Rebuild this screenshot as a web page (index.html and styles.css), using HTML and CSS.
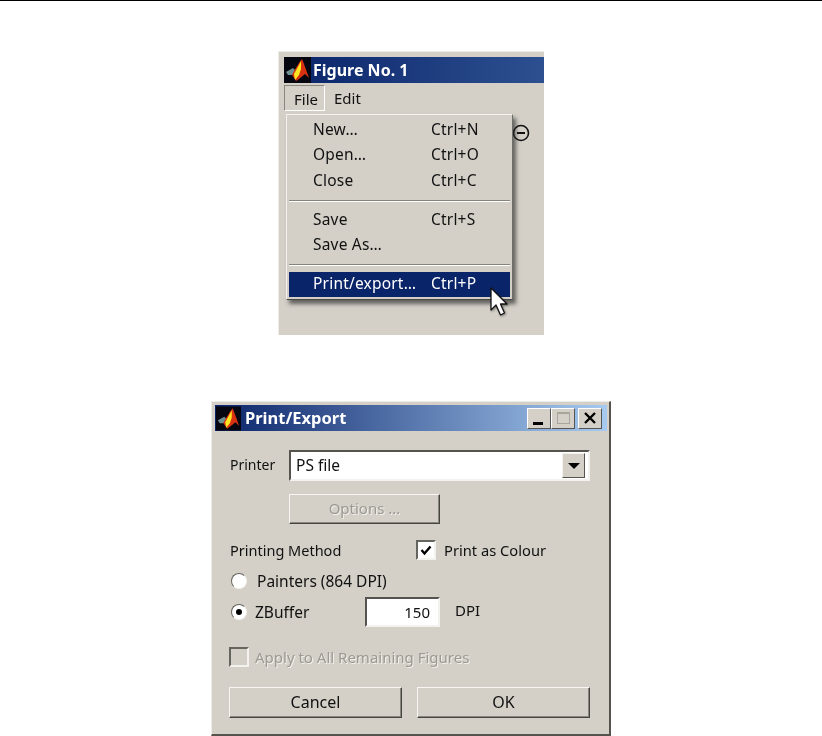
FILE: index.html
```html
<!DOCTYPE html>
<html lang="en">
<head>
<meta charset="utf-8">
<title>Print/Export</title>
<link rel="stylesheet" href="styles.css">
</head>
<body>
<svg width="0" height="0" class="defs">
  <defs>
    <symbol id="logo" viewBox="0 0 27 26">
      <rect width="27" height="26" fill="#05060f"/>
      <path d="M2 15 L9 11 L12 14 L8 18 L4 18Z" fill="#6f8f90"/>
      <path d="M10 14 L15 6 L18 2 L20 7 L25 21 L21 17 L15 22 L12 24 L8 18Z" fill="#d83212"/>
      <path d="M10 17 L15 8 L17 4 L17 12 L15 18 L11 23Z" fill="#ffe61e"/>
    </symbol>
  </defs>
</svg>
<header class="rule"></header>
<main class="page">
  <section class="figure">
    <div class="fig-title">
      <svg class="fig-logo"><use href="#logo"/></svg>
      <span>Figure No. 1</span>
    </div>
    <nav class="menubar">
      <span class="menu-item menu-open">File</span>
      <span class="menu-item">Edit</span>
    </nav>
    <svg class="zoom-icon" viewBox="0 0 18 18"><circle cx="9" cy="9" r="7.5" fill="none" stroke="#111" stroke-width="1.6"/><path d="M5 9h8" stroke="#111" stroke-width="2"/></svg>
    <div class="popup">
      <div class="row"><span class="row-name">New…</span><span>Ctrl+N</span></div>
      <div class="row"><span class="row-name">Open…</span><span>Ctrl+O</span></div>
      <div class="row"><span class="row-name">Close</span><span>Ctrl+C</span></div>
      <div class="sep"></div>
      <div class="row"><span class="row-name">Save</span><span>Ctrl+S</span></div>
      <div class="row"><span class="row-name">Save As…</span></div>
      <div class="sep"></div>
      <div class="row row-active"><span class="row-name">Print/export…</span><span>Ctrl+P</span></div>
    </div>
    <svg class="cursor" viewBox="0 0 18 30"><path d="M1 1 V23 L6 18 L10.500 28 L14.500 26 L10.500 17 L17 17Z" fill="#fff" stroke="#111" stroke-width="1.300" stroke-linejoin="round"/></svg>
  </section>

  <section class="dialog">
    <div class="dlg-title">
      <svg class="dlg-logo"><use href="#logo"/></svg>
      <span class="dlg-name">Print/Export</span>
      <div class="win-btns">
        <span class="win-btn"><i class="g-min"></i></span>
        <span class="win-btn"><i class="g-max"></i></span>
        <span class="win-btn win-close"><svg viewBox="0 0 14 12" width="14" height="12"><path d="M2 1 L12 11 M12 1 L2 11" stroke="#000" stroke-width="2.400"/></svg></span>
      </div>
    </div>
    <div class="dlg-body">
      <div class="r-printer">
        <label class="lbl-printer">Printer</label>
        <div class="combo">
          <span class="combo-val">PS file</span>
          <span class="combo-btn"><i class="arrow"></i></span>
        </div>
      </div>
      <div class="r-options"><button class="btn btn-options" disabled>Options ...</button></div>
      <div class="r-method">
        <span class="lbl-method">Printing Method</span>
        <span class="check checked"><svg viewBox="0 0 12 11" width="12" height="11"><path d="M1.500 5 L4.500 8.500 L10.500 1.500" fill="none" stroke="#000" stroke-width="2.400"/></svg></span>
        <span class="lbl-colour">Print as Colour</span>
      </div>
      <div class="r-painters">
        <span class="radio"></span>
        <span class="lbl-painters">Painters (864 DPI)</span>
      </div>
      <div class="r-zbuffer">
        <span class="radio radio-on"></span>
        <span class="lbl-z">ZBuffer</span>
        <span class="field">150</span>
        <span class="lbl-dpi">DPI</span>
      </div>
      <div class="r-apply">
        <span class="check check-off"></span>
        <span class="lbl-apply">Apply to All Remaining Figures</span>
      </div>
      <div class="r-buttons">
        <button class="btn btn-main">Cancel</button>
        <button class="btn btn-main">OK</button>
      </div>
    </div>
  </section>
</main>
</body>
</html>
```
FILE: styles.css
```css
* { box-sizing: border-box; }
html, body { margin: 0; padding: 0; background: #fff; }
body {
  width: 822px;
  height: 736px;
  overflow: hidden;
  font-family: "Noto Sans", "Open Sans", "Liberation Sans", sans-serif;
  color: #111;
}
.defs { position: absolute; }
.rule { height: 1px; background: #000; }
.page { display: flex; flex-direction: column; }

/* Figure window crop */
.figure {
  position: relative;
  width: 266px;
  height: 284px;
  margin: 50px 0 0 278px;
  padding: 5px 0 0 6px;
  background: #d4d0c8;
  border-top: 1px solid #eeece6;
  border-left: 1px solid #eeece6;
  filter: blur(.4px);
}
.fig-title {
  display: flex;
  align-items: center;
  height: 26px;
  margin-left: -1px;
  gap: 2px;
  color: #fff;
  font-size: 16px;
  line-height: 24px;
  font-weight: 700;
  background: linear-gradient(90deg, #0a246a 0, #2d5090 100%);
}
.fig-logo { width: 27px; height: 26px; }
.menubar {
  display: flex;
  height: 27px;
  margin-left: -1px;
  margin-top: 2px;
  font-size: 15px;
}
.menu-item {
  display: flex;
  align-items: center;
  padding: 0 0 2px 9px;
}
.menu-open {
  width: 41px;
  padding: 2px 0 0 9px;
  height: 26px;
  border: 1px solid;
  border-color: #8a877f #fff #fff #8a877f;
}
.zoom-icon {
  position: absolute;
  left: 233px;
  top: 72px;
  width: 18px;
  height: 18px;
}
.popup {
  position: absolute;
  left: 7px;
  top: 62px;
  width: 227px;
  padding: 2px;
  background: #d4d0c8;
  border: 1px solid;
  border-color: #f4f2ee #6e6c66 #4a4844 #f4f2ee;
  box-shadow: 3px 4px 4px rgba(40, 40, 40, .65);
  font-size: 15.500px;
  letter-spacing: .2px;
}
.row {
  display: flex;
  align-items: center;
  height: 25.500px;
  padding: 0 0 2px 24px;
}
.row-name { width: 118px; }
.row-active { background: #0a246a; color: #fff; }
.sep {
  height: 2px;
  margin: 6px 0 5.500px;
  background: #fff;
  border-top: 1px solid #86837c;
}
.cursor {
  position: absolute;
  left: 211px;
  top: 235px;
  width: 18px;
  height: 30px;
  filter: drop-shadow(1px 1px 1px rgba(40, 40, 40, .5));
}

/* Print/Export dialog */
.dialog {
  width: 400px;
  height: 335px;
  margin: 66px 0 0 211px;
  padding: 3px 2px 3px 3px;
  background: #d4d0c8;
  border-top: 1px solid #eeece6;
  border-left: 1px solid #eeece6;
  border-right: 2px solid #55534e;
  border-bottom: 2px solid #55534e;
  filter: blur(.4px);
}
.dlg-title {
  display: flex;
  align-items: center;
  height: 26px;
  padding-left: 1px;
  color: #fff;
  font-size: 16.500px;
  line-height: 24px;
  font-weight: 700;
  background: linear-gradient(90deg, #0a246a 0, #a6caf0 100%);
}
.dlg-logo { width: 25px; height: 25px; }
.dlg-name { margin-left: 4px; flex: 1; padding-bottom: 1px; }
.win-btns { display: flex; margin-right: 5px; }
.win-btn {
  display: flex;
  align-items: center;
  justify-content: center;
  position: relative;
  width: 24px;
  height: 21px;
  background: #d4d0c8;
  border: 1px solid;
  border-color: #fff #555 #555 #fff;
}
.win-close { margin-left: 3px; }
.g-min { position: absolute; left: 5px; bottom: 3px; width: 10px; height: 3px; background: #000; }
.g-max { width: 13px; height: 12px; border: 1px solid #a8a59e; border-top-width: 2px; }

.dlg-body { padding-left: 14px; font-size: 14.500px; }
.r-printer { display: flex; align-items: center; height: 31px; margin-top: 19px; }
.lbl-printer { width: 60px; margin-top: -3px; padding-left: 1px; font-size: 14px; }
.combo {
  display: flex;
  align-items: center;
  justify-content: space-between;
  width: 301px;
  height: 31px;
  padding: 0 3px 0 5px;
  font-size: 15.500px;
  background: #fff;
  border: 2px solid;
  border-color: #55534e #f4f2ee #f4f2ee #55534e;
  outline: 1px solid #d4d0c8;
}
.combo-val { margin-top: -1px; }
.combo-btn {
  display: flex;
  align-items: center;
  justify-content: center;
  width: 23px;
  height: 25px;
  background: #d4d0c8;
  border: 1px solid;
  border-color: #f4f2ee #55534e #55534e #f4f2ee;
}
.arrow {
  width: 0;
  height: 0;
  border-left: 6px solid transparent;
  border-right: 6px solid transparent;
  border-top: 6px solid #000;
}
.btn {
  display: block;
  padding: 0 0 2px;
  font: inherit;
  font-size: 16px;
  color: #111;
  background: #d4d0c8;
  border: 1px solid;
  border-color: #f8f6f2 #46443f #46443f #f8f6f2;
  box-shadow: inset -1px -1px 0 #8a877f;
}
.btn:disabled { font-size: 15px; color: #9c9992; text-shadow: 1px 1px 0 #f2f0ec; }
.r-options { margin: 13px 0 0 60px; }
.btn-options { width: 151px; height: 30px; }
.r-method { display: flex; align-items: center; height: 20px; margin-top: 16px; }
.lbl-method { width: 187px; padding-left: 1px; padding-bottom: 1px; }
.check {
  display: flex;
  align-items: center;
  justify-content: center;
  width: 20px;
  height: 20px;
  background: #fff;
  border: 2px solid;
  border-color: #66645e #f4f2ee #f4f2ee #66645e;
}
.check-off { background: #d4d0c8; }
.lbl-colour { margin-left: 8px; font-size: 14.700px; }
.r-painters { display: flex; align-items: center; height: 20px; margin-top: 11px; padding-left: 2px; }
.radio {
  position: relative;
  flex: none;
  width: 16px;
  height: 16px;
  background: #fff;
  border-radius: 50%;
  border: 1.500px solid;
  border-color: #66645e #f4f2ee #f4f2ee #66645e;
}
.radio-on::after {
  content: "";
  position: absolute;
  left: 3.500px;
  top: 3.500px;
  width: 6px;
  height: 6px;
  background: #000;
  border-radius: 50%;
}
.lbl-painters { margin-left: 10px; font-size: 15.500px; }
.r-zbuffer { display: flex; align-items: center; height: 30px; margin-top: 6px; padding-left: 2px; }
.lbl-z { width: 110px; margin-left: 8px; font-size: 15.500px; }
.field {
  width: 75px;
  height: 30px;
  padding: 3px 8px 0 0;
  text-align: right;
  font-size: 15px;
  background: #fff;
  border: 2px solid;
  border-color: #55534e #f4f2ee #f4f2ee #55534e;
}
.lbl-dpi { margin-left: 15px; margin-top: -4px; font-size: 15px; }
.r-apply { display: flex; align-items: center; height: 20px; margin-top: 20px; }
.lbl-apply { margin-left: 6px; font-size: 15px; color: #9c9992; text-shadow: 1px 1px 0 #f2f0ec; }
.r-buttons { display: flex; gap: 15px; margin-top: 20px; }
.btn-main { width: 173px; height: 31px; }
```
